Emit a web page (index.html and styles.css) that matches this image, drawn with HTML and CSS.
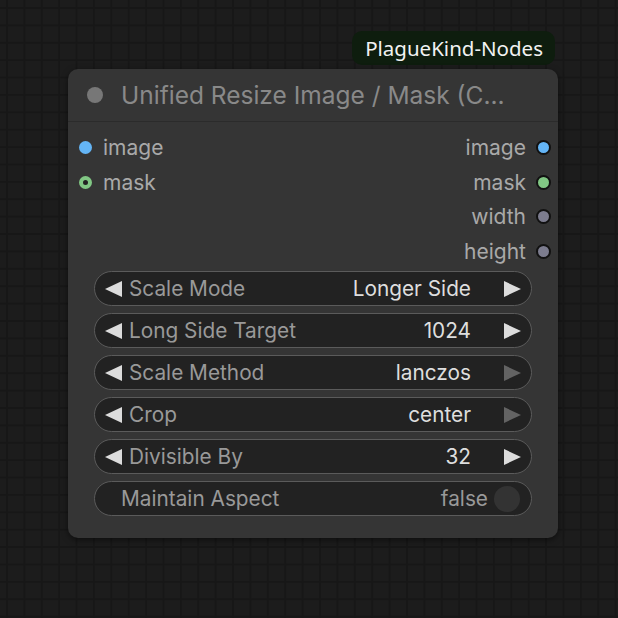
FILE: index.html
```html
<!DOCTYPE html>
<html lang="en">
<head>
  <meta charset="UTF-8" />
  <title>Unified Resize Image / Mask</title>
  <link rel="stylesheet" href="styles.css">
</head>
<body>

  <div class="canvas">
    <div class="node-wrap">
      <div class="badge">PlagueKind-Nodes</div>

      <div class="node">
        <div class="node-title">
          <span class="title-dot"></span>
          <span class="title-text">Unified Resize Image / Mask (C...</span>
        </div>

        <div class="slots">
          <div class="slot-col">
            <div class="slot"><span class="dot dot-image"></span>image</div>
            <div class="slot"><span class="dot dot-mask-ring"></span>mask</div>
          </div>
          <div class="slot-col slot-col-out">
            <div class="slot">image<span class="dot dot-image out"></span></div>
            <div class="slot">mask<span class="dot dot-mask out"></span></div>
            <div class="slot">width<span class="dot dot-int out"></span></div>
            <div class="slot">height<span class="dot dot-int out"></span></div>
          </div>
        </div>

        <div class="widgets">
          <div class="widget">
            <span class="arrow arrow-left"></span>
            <span class="w-label">Scale Mode</span>
            <span class="w-value">Longer Side</span>
            <span class="arrow arrow-right"></span>
          </div>
          <div class="widget">
            <span class="arrow arrow-left"></span>
            <span class="w-label">Long Side Target</span>
            <span class="w-value">1024</span>
            <span class="arrow arrow-right"></span>
          </div>
          <div class="widget">
            <span class="arrow arrow-left"></span>
            <span class="w-label">Scale Method</span>
            <span class="w-value">lanczos</span>
            <span class="arrow arrow-right off"></span>
          </div>
          <div class="widget">
            <span class="arrow arrow-left"></span>
            <span class="w-label">Crop</span>
            <span class="w-value">center</span>
            <span class="arrow arrow-right off"></span>
          </div>
          <div class="widget">
            <span class="arrow arrow-left"></span>
            <span class="w-label">Divisible By</span>
            <span class="w-value">32</span>
            <span class="arrow arrow-right"></span>
          </div>
          <div class="widget widget-toggle">
            <span class="w-label">Maintain Aspect</span>
            <span class="w-value dim">false</span>
            <span class="toggle"></span>
          </div>
        </div>
      </div>
    </div>
  </div>

</body>
</html>
```

FILE: styles.css
```css
/* Fundo com grade */
body {
  margin: 0;
  font-family: Inter, "Noto Sans", sans-serif;
  background-color: #1c1c1c;
  background-image:
    linear-gradient(#171717 2px, transparent 2px),
    linear-gradient(90deg, #171717 2px, transparent 2px);
  background-size: 17.4px 17.4px;
  background-position: 6px 7px;
}

.canvas {
  position: relative;
  width: 618px;
  height: 618px;
  overflow: hidden;
}

.node-wrap {
  position: absolute;
  left: 68px;
  top: 31px;
  width: 490px;
  display: flex;
  flex-direction: column;
  align-items: flex-end;
}

.badge {
  margin-right: 3px;
  height: 34px;
  padding: 0 12px 0 13px;
  display: flex;
  align-items: center;
  background: #0e1d0e;
  color: #f2f2f2;
  font-family: "Noto Sans", sans-serif;
  font-size: 20.5px;
  border-radius: 10px;
}

.node {
  margin-top: 4px;
  width: 490px;
  background: #353535;
  border-radius: 10px;
  box-shadow: 0 2px 6px rgba(0, 0, 0, 0.5);
  padding-bottom: 22px;
}

.node-title {
  height: 52px;
  display: flex;
  align-items: center;
  border-bottom: 1px solid #2b2b2b;
  padding-left: 19px;
  gap: 18px;
}

.title-dot {
  width: 16px;
  height: 16px;
  border-radius: 50%;
  background: #777;
}

.title-text {
  color: #898989;
  font-size: 24.5px;
}

/* Entradas e saidas */
.slots {
  display: flex;
  justify-content: space-between;
  padding: 8px 7px 0 11px;
  height: 141px;
}

.slot-col {
  display: flex;
  flex-direction: column;
}

.slot-col-out {
  align-items: flex-end;
}

.slot {
  height: 34.7px;
  display: flex;
  align-items: center;
  gap: 11px;
  color: #a9a9a9;
  font-size: 21px;
}

.slot-col-out .slot {
  gap: 10px;
}

.dot {
  width: 13px;
  height: 13px;
  border-radius: 50%;
  box-sizing: border-box;
}

.dot.out {
  border: 2px solid #111;
  width: 15px;
  height: 15px;
}

.dot-image { background: #64b5f6; }
.dot-mask { background: #81c784; }
.dot-int { background: #7c7c8e; }

.dot-mask-ring {
  background: #222;
  border: 4px solid #81c784;
}

/* Widgets */
.widgets {
  display: flex;
  flex-direction: column;
  gap: 7px;
  padding: 0 26px;
}

.widget {
  height: 35px;
  box-sizing: border-box;
  border: 1.5px solid #5b5b5b;
  border-radius: 18px;
  background: #222;
  display: flex;
  align-items: center;
  padding: 0 10px;
  font-size: 20.8px;
}

.arrow {
  width: 0;
  height: 0;
  border-top: 8px solid transparent;
  border-bottom: 8px solid transparent;
}

.arrow-left {
  border-right: 17px solid #dcdcdc;
  margin-right: 7px;
}

.arrow-right {
  border-left: 17px solid #dcdcdc;
  margin-left: 33px;
}

.arrow-right.off {
  border-left-color: #636363;
}

.w-label {
  color: #999;
  flex: 1;
}

.w-value {
  color: #dedede;
}

.w-value.dim {
  color: #999;
}

.widget-toggle {
  padding-left: 26px;
  padding-right: 11px;
}

.toggle {
  width: 26px;
  height: 26px;
  border-radius: 50%;
  background: #333;
  margin-left: 6px;
}
```
